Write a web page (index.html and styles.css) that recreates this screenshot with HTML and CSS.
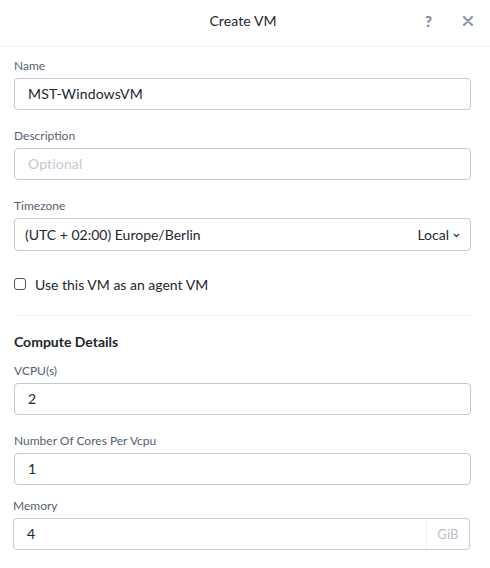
FILE: index.html
```html
<!DOCTYPE html>
<html>
<head>
<meta charset="utf-8">
<link rel="stylesheet" href="styles.css">
</head>
<body>
<div class="modal">
  <div class="header">
    <div class="title">Create VM</div>
    <div class="actions">
      <span class="help">?</span>
      <svg class="close" width="10" height="10" viewBox="0 0 10 10"><path d="M1 1L9 9M9 1L1 9" stroke="#8d97a6" stroke-width="2.2" stroke-linecap="round"/></svg>
    </div>
  </div>
  <div class="body">
    <div class="field">
      <div class="label">Name</div>
      <div class="input">MST-WindowsVM</div>
    </div>
    <div class="field">
      <div class="label">Description</div>
      <div class="input placeholder">Optional</div>
    </div>
    <div class="field">
      <div class="label">Timezone</div>
      <div class="input select">
        <span>(UTC + 02:00) Europe/Berlin</span>
        <span class="local">Local <svg width="7" height="5" viewBox="0 0 7 5"><path d="M1 1L3.5 3.5L6 1" stroke="#3a4250" stroke-width="1.4" fill="none"/></svg></span>
      </div>
    </div>
    <label class="check">
      <span class="box"></span>
      <span>Use this VM as an agent VM</span>
    </label>
    <div class="divider"></div>
    <div class="section">Compute Details</div>
    <div class="field">
      <div class="label">VCPU(s)</div>
      <div class="input">2</div>
    </div>
    <div class="field">
      <div class="label">Number Of Cores Per Vcpu</div>
      <div class="input">1</div>
    </div>
    <div class="field mem">
      <div class="label">Memory</div>
      <div class="input addon">
        <span class="val">4</span>
        <span class="unit">GiB</span>
      </div>
    </div>
  </div>
</div>
</body>
</html>
```
FILE: styles.css
```css
* { box-sizing: border-box; }
html, body { margin: 0; padding: 0; background: #fff; }
body {
  font-family: Lato, "Open Sans", "Liberation Sans", sans-serif;
  color: #22272e;
  width: 490px;
  height: 568px;
  overflow: hidden;
}
.header {
  position: relative;
  height: 47px;
  padding-bottom: 6px;
  border-bottom: 1px solid #eef0f3;
  display: flex;
  align-items: center;
  justify-content: center;
}
.title {
  font-size: 14px;
  letter-spacing: 0.1px;
  margin-left: -4px;
}
.actions {
  position: absolute;
  right: 17px;
  top: 12px;
  display: flex;
  align-items: center;
  gap: 31px;
}
.help {
  font-size: 15px;
  font-weight: 900;
  color: #7f8a9b;
}
.body {
  padding: 11px 19px 0 14px;
}
.field { margin-bottom: 18px; }
.label {
  font-size: 12px;
  line-height: 16px;
  color: #56616f;
  margin-bottom: 4px;
}
.input {
  height: 32px;
  border: 1px solid #c3c8d3;
  border-radius: 4px;
  padding: 0 13px;
  font-size: 14px;
  line-height: 30px;
  color: #22272e;
  letter-spacing: 0.15px;
}
.placeholder { color: #c3c9d2; }
.select {
  height: 33px;
  line-height: 31px;
  display: flex;
  justify-content: space-between;
  padding: 0 10px 0 10px;
  letter-spacing: 0;
}
.local { display: flex; align-items: center; gap: 4px; }
.local svg { margin-top: 1px; }
.check {
  display: flex;
  align-items: center;
  gap: 9px;
  font-size: 14px;
  margin-top: 24px;
  height: 18px;
}
.box {
  width: 12px;
  height: 12px;
  border: 1.5px solid #4a5260;
  border-radius: 3px;
}
.divider {
  height: 1px;
  background: #eef0f3;
  margin: 22px 0 18px;
}
.section {
  font-size: 14px;
  font-weight: 700;
  line-height: 16px;
  margin-bottom: 13px;
}
.mem { margin-top: -5px; margin-left: -1px; margin-right: 1px; }
.addon {
  display: flex;
  padding: 0 0 0 13px;
}
.addon .val { flex: 1; }
.unit {
  width: 43px;
  border-left: 1px solid #eef0f3;
  margin: 1px 0;
  line-height: 28px;
  text-align: center;
  color: #b9c0cb;
  font-size: 13px;
}
```
